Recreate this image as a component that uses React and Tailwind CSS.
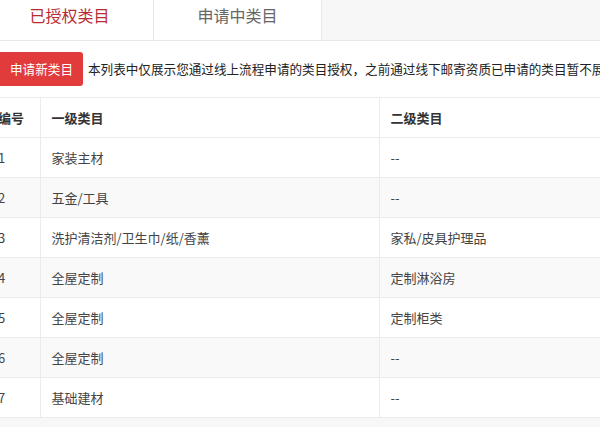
const rows = [
  { id: 1, first: '家装主材', second: '--' },
  { id: 2, first: '五金/工具', second: '--' },
  { id: 3, first: '洗护清洁剂/卫生巾/纸/香薰', second: '家私/皮具护理品' },
  { id: 4, first: '全屋定制', second: '定制淋浴房' },
  { id: 5, first: '全屋定制', second: '定制柜类' },
  { id: 6, first: '全屋定制', second: '--' },
  { id: 7, first: '基础建材', second: '--' },
]

function Tab({ label, active }) {
  return (
    <div
      className={
        active
          ? 'h-[40px] w-[168px] border-r border-[#e8e8e8] bg-white pt-[3px] text-center text-[16px] leading-[24px] text-[#b92c31]'
          : 'h-[40px] w-[168px] border-r border-[#e8e8e8] bg-white pt-[3px] text-center text-[16px] leading-[24px] text-[#666]'
      }
    >
      {label}
    </div>
  )
}

export default function App() {
  return (
    <div
      className="h-[427px] w-[600px] overflow-hidden bg-[#f7f7f7] text-[#333]"
      style={{ fontFamily: '"Microsoft YaHei", "Noto Sans CJK SC", "Liberation Sans", sans-serif' }}
    >
      <div className="ml-[-14px] w-[720px]">
        <div className="flex h-[41px] border-b border-[#e8e8e8]">
          <Tab label="已授权类目" active />
          <Tab label="申请中类目" />
        </div>

        <div className="bg-white pt-[11px]">
          <div className="flex items-center">
            <button
              type="button"
              className="ml-[10px] h-[34px] rounded-[3px] bg-[#e23b3b] pl-[14px] pr-[10px] text-[12.6px] text-white"
            >
              申请新类目
            </button>
            <p className="ml-[5px] whitespace-nowrap text-[12.6px] text-[#222]">
              本列表中仅展示您通过线上流程申请的类目授权，之前通过线下邮寄资质已申请的类目暂不展示
            </p>
          </div>

          <table className="mt-[11px] w-full border-collapse text-left text-[13px]">
            <thead>
              <tr className="h-[40px] border-y border-[#ebebeb] bg-white">
                <th className="w-[54px] border-r border-[#ebebeb] pl-[12px] font-semibold text-[#333]">
                  编号
                </th>
                <th className="w-[339px] border-r border-[#ebebeb] pl-[11px] font-semibold text-[#333]">
                  一级类目
                </th>
                <th className="pl-[11px] font-semibold text-[#333]">二级类目</th>
              </tr>
            </thead>
            <tbody>
              {rows.map((row) => (
                <tr
                  key={row.id}
                  className={
                    row.id % 2 === 0
                      ? 'h-[40px] border-b border-[#ebebeb] bg-[#f9f9f9]'
                      : 'h-[40px] border-b border-[#ebebeb] bg-white'
                  }
                >
                  <td className="border-r border-[#ebebeb] pl-[12px] text-[#444]">{row.id}</td>
                  <td className="border-r border-[#ebebeb] pl-[11px] text-[#444]">{row.first}</td>
                  <td className="pl-[11px] text-[#444]">{row.second}</td>
                </tr>
              ))}
            </tbody>
          </table>
        </div>
      </div>
    </div>
  )
}
